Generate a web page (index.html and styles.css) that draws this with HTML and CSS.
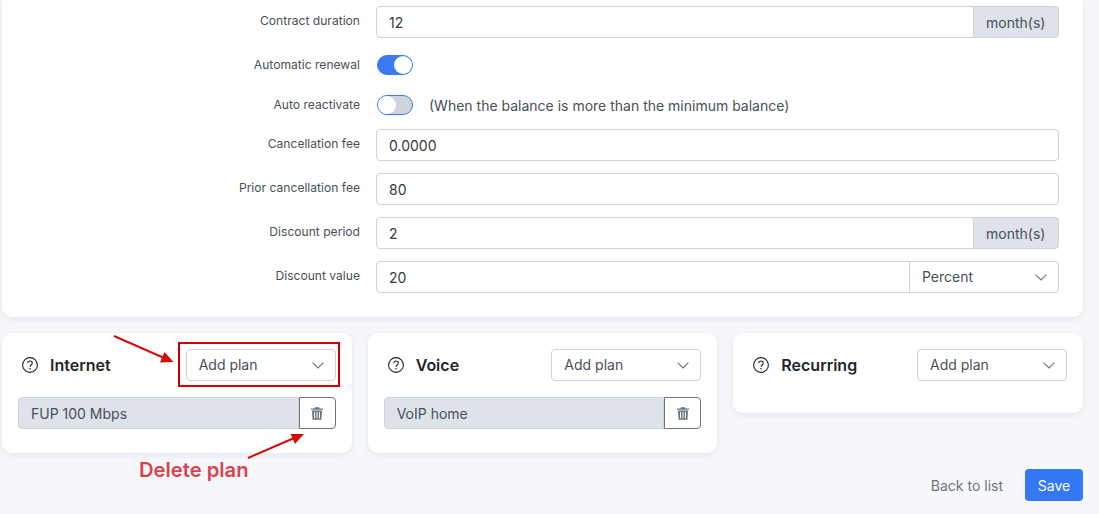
FILE: index.html
```html
<!DOCTYPE html>
<html lang="en">
<head>
    <meta charset="UTF-8">
    <meta name="viewport" content="width=device-width, initial-scale=1.0">
    <title>Bundle</title>
    <link rel="stylesheet" href="styles.css">
</head>
<body>

    <svg width="0" height="0" class="defs">
        <symbol id="icon-help" viewBox="0 0 16 16">
            <circle cx="8" cy="8" r="7.4" fill="none" stroke="currentColor" stroke-width="1.1"/>
            <path d="M5.7 6.2c0-1.3 1-2.2 2.3-2.2s2.3.9 2.3 2.1c0 1.9-2.3 1.9-2.3 3.7" fill="none" stroke="currentColor" stroke-width="1.1"/>
            <circle cx="8" cy="11.7" r=".8" fill="currentColor"/>
        </symbol>
        <symbol id="icon-trash" viewBox="0 0 12 13">
            <path d="M4 .3h4l.6 1.2H12v1.300H0V1.500h3.400zM1 3.600h10l-.5 9.100H1.500zM3.100 5v6.300h1V5zm2.400 0v6.300h1V5zm2.400 0v6.300h1V5z" fill="currentColor" fill-rule="evenodd"/>
        </symbol>
        <symbol id="icon-chevron" viewBox="0 0 12 7">
            <path d="M.6.6 6 6l5.400-5.400" fill="none" stroke="currentColor" stroke-width="1.1"/>
        </symbol>
    </svg>

    <section class="card main-card">
        <div class="row">
            <label class="row-label">Contract duration</label>
            <div class="input-group">
                <div class="input">12</div>
                <span class="addon">month(s)</span>
            </div>
        </div>
        <div class="row row-toggle">
            <label class="row-label">Automatic renewal</label>
            <span class="toggle on"></span>
        </div>
        <div class="row row-toggle last">
            <label class="row-label">Auto reactivate</label>
            <span class="toggle"></span>
            <span class="toggle-note">(When the balance is more than the minimum balance)</span>
        </div>
        <div class="row">
            <label class="row-label">Cancellation fee</label>
            <div class="input-group">
                <div class="input">0.0000</div>
            </div>
        </div>
        <div class="row">
            <label class="row-label">Prior cancellation fee</label>
            <div class="input-group">
                <div class="input">80</div>
            </div>
        </div>
        <div class="row">
            <label class="row-label">Discount period</label>
            <div class="input-group">
                <div class="input">2</div>
                <span class="addon">month(s)</span>
            </div>
        </div>
        <div class="row">
            <label class="row-label">Discount value</label>
            <div class="input-group">
                <div class="input">20</div>
                <div class="select select-joined">Percent <svg class="chevron"><use href="#icon-chevron"/></svg></div>
            </div>
        </div>
    </section>

    <div class="plans">
        <section class="card plan-card">
            <div class="plan-head">
                <svg class="help"><use href="#icon-help"/></svg>
                <h3>Internet</h3>
                <div class="select">Add plan <svg class="chevron"><use href="#icon-chevron"/></svg></div>
            </div>
            <div class="plan-item">
                <div class="plan-name">FUP 100 Mbps</div>
                <button type="button" class="trash"><svg><use href="#icon-trash"/></svg></button>
            </div>
        </section>
        <section class="card plan-card">
            <div class="plan-head">
                <svg class="help"><use href="#icon-help"/></svg>
                <h3>Voice</h3>
                <div class="select">Add plan <svg class="chevron"><use href="#icon-chevron"/></svg></div>
            </div>
            <div class="plan-item">
                <div class="plan-name">VoIP home</div>
                <button type="button" class="trash"><svg><use href="#icon-trash"/></svg></button>
            </div>
        </section>
        <section class="card plan-card">
            <div class="plan-head">
                <svg class="help"><use href="#icon-help"/></svg>
                <h3>Recurring</h3>
                <div class="select">Add plan <svg class="chevron"><use href="#icon-chevron"/></svg></div>
            </div>
        </section>
    </div>

    <div class="actions">
        <a class="back-link">Back to list</a>
        <button type="button" class="save">Save</button>
    </div>

    <!-- annotations drawn on top of the screenshot -->
    <div class="note-box"></div>
    <span class="note-text">Delete plan</span>
    <svg class="note-arrows" width="1099" height="514" viewBox="0 0 1099 514">
        <path d="M114 336 163 357.500" stroke="#d40b0b" stroke-width="2" fill="none"/>
        <path d="M173.500 362 160 362.500 164.500 352z" fill="#d40b0b"/>
        <path d="M248 458 293 438.500" stroke="#d40b0b" stroke-width="2" fill="none"/>
        <path d="M304 434 295 444 290.500 434z" fill="#d40b0b"/>
    </svg>

</body>
</html>
```

FILE: styles.css
```css
* {
    box-sizing: border-box;
}

body {
    position: relative;
    margin: 0;
    padding: 0 16px 13px 2px;
    height: 514px;
    overflow: hidden;
    font-family: 'Inter', sans-serif;
    font-size: 14px;
    color: #343a40;
    background-color: #f5f7fb;
}

.defs {
    position: absolute;
}

.card {
    background-color: #fff;
    border-radius: 10px;
    box-shadow: 0 2px 6px rgba(30, 40, 80, 0.08);
}

.main-card {
    padding: 6px 24px 24px 0;
    border-top-left-radius: 0;
    border-top-right-radius: 0;
}

.row {
    display: flex;
    align-items: center;
    margin-bottom: 12px;
}

.row:last-child {
    margin-bottom: 0;
}

.row-toggle {
    height: 28px;
}

.row-toggle:nth-child(2) {
    margin-top: 13px;
}

.row-toggle.last {
    margin-bottom: 10px;
}

.row-label {
    flex: 0 0 358px;
    margin-right: 16px;
    padding-bottom: 3px;
    text-align: right;
    font-size: 12.1px;
    color: #495057;
}

.row-toggle .row-label {
    padding-bottom: 1px;
}

.input-group {
    flex: 1;
    display: flex;
    height: 32px;
}

.input {
    flex: 1;
    display: flex;
    align-items: center;
    padding: 0 12px;
    background-color: #fff;
    border: 1px solid #ced4da;
    border-radius: 4px;
}

.input-group .input:not(:last-child) {
    border-top-right-radius: 0;
    border-bottom-right-radius: 0;
}

.addon {
    display: flex;
    align-items: center;
    width: 86px;
    padding: 0 12px;
    margin-left: -1px;
    color: #495057;
    background-color: #dee2eb;
    border: 1px solid #ced4da;
    border-radius: 0 4px 4px 0;
}

.select {
    position: relative;
    display: flex;
    align-items: center;
    flex: 0 0 150px;
    height: 32px;
    padding: 0 12px 1px;
    color: #495057;
    background-color: #fff;
    border: 1px solid #ced4da;
    border-radius: 4px;
}

.select-joined {
    margin-left: -1px;
    border-radius: 0 4px 4px 0;
}

.chevron {
    position: absolute;
    right: 11px;
    top: 12px;
    width: 12px;
    height: 7px;
    color: #6c757d;
}

.toggle {
    position: relative;
    width: 36px;
    height: 20px;
    margin-left: 1px;
    background-color: #ced4da;
    border: 1px solid #3a7bf2;
    border-radius: 10px;
}

.toggle::after {
    content: '';
    position: absolute;
    left: 0;
    top: 0;
    width: 18px;
    height: 18px;
    background-color: #fff;
    border-radius: 50%;
}

.toggle.on {
    background-color: #3a7bf2;
}

.toggle.on::after {
    left: 16px;
}

.toggle-note {
    margin-left: 16px;
    color: #495057;
}

.plans {
    display: grid;
    grid-template-columns: repeat(3, 1fr);
    gap: 16px;
    align-items: start;
    margin-top: 16px;
}

.plan-card {
    padding: 16px 16px 24px;
}

.plan-head {
    display: flex;
    align-items: center;
    height: 32px;
    margin-bottom: 8px;
}

.help {
    width: 16px;
    height: 16px;
    margin: 0 12px 0 4px;
    color: #212529;
}

.plan-head h3 {
    flex: 1;
    margin: 0;
    font-size: 16px;
    font-weight: 600;
    color: #212529;
}

.plan-item {
    display: flex;
    height: 32px;
    margin-top: 16px;
}

.plan-name {
    flex: 1;
    display: flex;
    align-items: center;
    padding: 1px 12px 0;
    color: #495057;
    background-color: #dee2eb;
    border: 1px solid #ced4da;
    border-radius: 4px 0 0 4px;
}

.trash {
    display: flex;
    align-items: center;
    justify-content: center;
    width: 37px;
    padding: 0;
    color: #6c757d;
    background-color: #fff;
    border: 1px solid #6c757d;
    border-radius: 0 4px 4px 0;
}

.trash svg {
    width: 12px;
    height: 13px;
}

.actions {
    display: flex;
    align-items: center;
    justify-content: flex-end;
    gap: 22px;
    margin-top: 16px;
}

.back-link {
    color: #6c757d;
}

.save {
    width: 58px;
    height: 32px;
    padding: 0;
    font-family: inherit;
    font-size: 14px;
    color: #fff;
    background-color: #3478f6;
    border: none;
    border-radius: 4px;
}

.note-box {
    position: absolute;
    left: 178px;
    top: 342px;
    width: 162px;
    height: 45px;
    border: 2px solid #d00000;
}

.note-text {
    position: absolute;
    left: 139px;
    top: 457px;
    font-size: 20.2px;
    font-weight: 600;
    color: #d9434e;
}

.note-arrows {
    position: absolute;
    left: 0;
    top: 0;
    pointer-events: none;
}
```
